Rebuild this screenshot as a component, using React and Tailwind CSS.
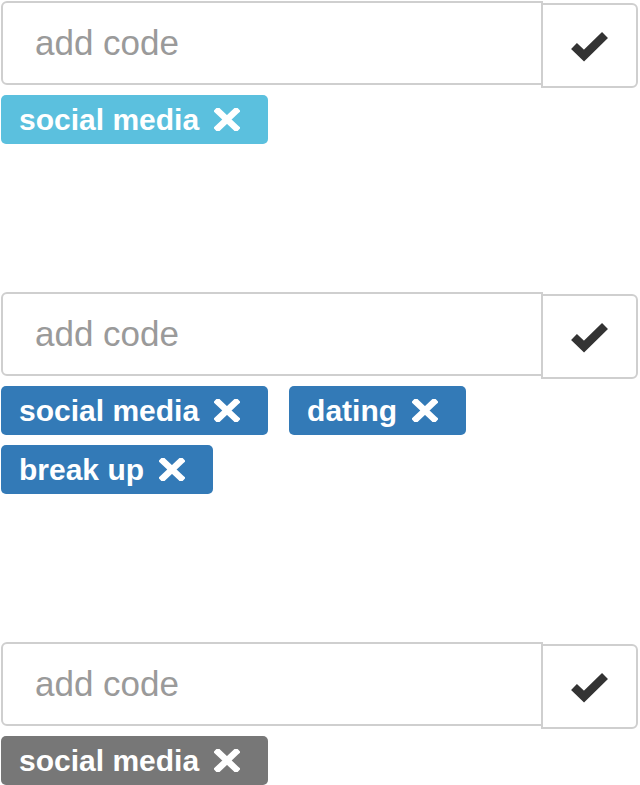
import React from "react";

function CheckIcon() {
  return (
    <svg width="40" height="32" viewBox="0 0 40 32" aria-hidden="true">
      <polyline
        points="4,16 14,25.5 35,5"
        fill="none"
        stroke="#333"
        strokeWidth="8.5"
        strokeLinecap="butt"
        strokeLinejoin="miter"
      />
    </svg>
  );
}

function RemoveIcon() {
  return (
    <svg width="26" height="23" viewBox="0 0 26 23" aria-hidden="true">
      <path d="M4 3 L22 20 M22 3 L4 20" stroke="#fff" strokeWidth="6.5" strokeLinecap="square" fill="none" />
    </svg>
  );
}

function Tag({ label, color }) {
  return (
    <span
      className={`inline-flex h-[49px] items-center rounded-[5px] pl-[18px] pr-[28px] text-[30px] font-bold leading-none text-white ${color}`}
    >
      <span>{label}</span>
      <span className="ml-[15px] flex items-center">
        <RemoveIcon />
      </span>
    </span>
  );
}

function CodeInput({ tags, color }) {
  return (
    <div className="flex flex-col">
      <div className="flex items-start">
        <input
          type="text"
          placeholder="add code"
          className="h-[84px] w-[542px] rounded-l-[6px] border-2 border-[#cfcfcf] bg-white pl-[32px] text-[35px] text-[#555] placeholder:text-[#9a9a9a] outline-none"
        />
        <button
          type="button"
          className="-ml-[2px] mt-[2px] flex h-[85px] w-[97px] items-center justify-center rounded-r-[6px] border-2 border-[#cfcfcf] bg-white"
        >
          <CheckIcon />
        </button>
      </div>
      <div className="mt-[7px] flex w-[520px] flex-wrap gap-x-[21px] gap-y-[10px]">
        {tags.map((t) => (
          <Tag key={t} label={t} color={color} />
        ))}
      </div>
    </div>
  );
}

export default function App() {
  return (
    <div className="min-h-screen bg-white pl-[1px] pt-[1px] font-['Liberation_Sans',Arial,sans-serif]">
      <div className="flex flex-col gap-[148px]">
        <CodeInput tags={["social media"]} color="bg-[#5bc0de]" />
        <CodeInput tags={["social media", "dating", "break up"]} color="bg-[#337ab7]" />
        <CodeInput tags={["social media"]} color="bg-[#777777]" />
      </div>
    </div>
  );
}
